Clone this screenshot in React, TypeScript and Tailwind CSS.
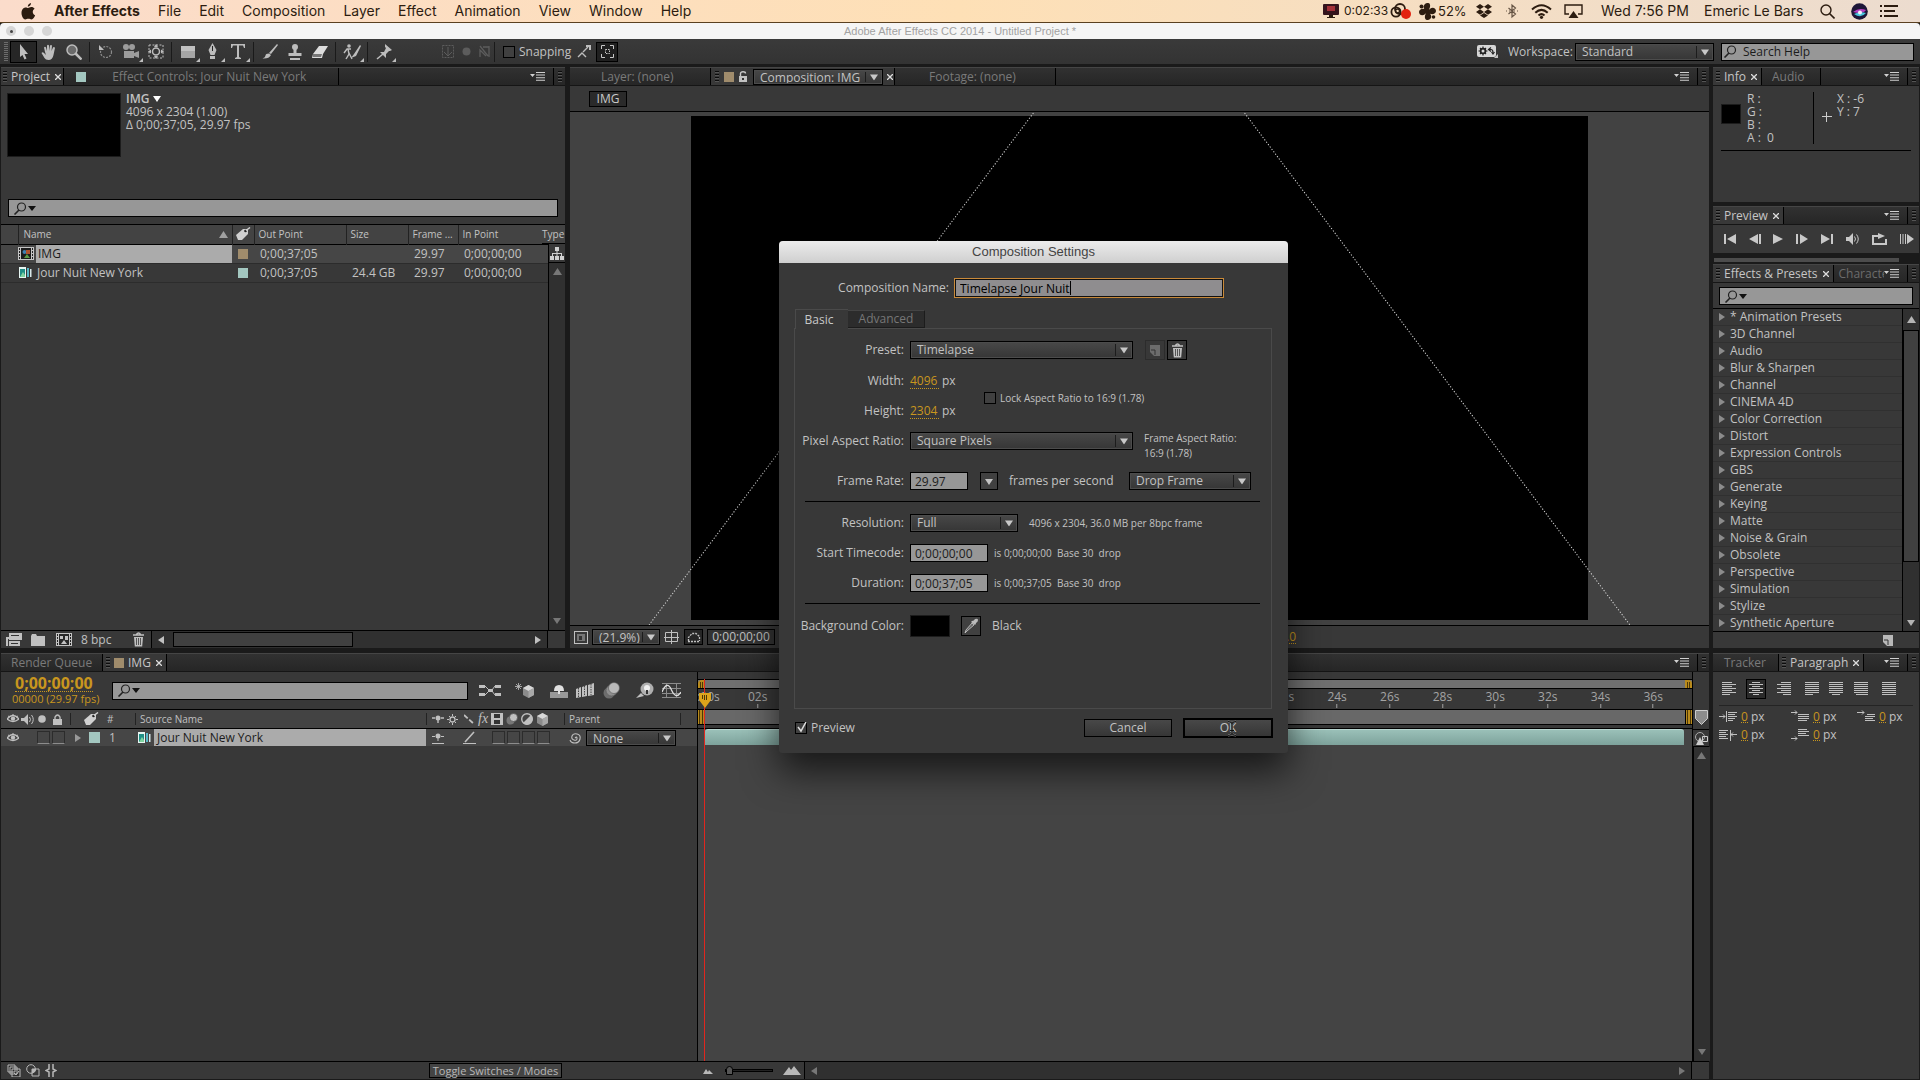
import React from "react"

interface IconProps {
    w: number,
    h: number,
    className?: string,
    children: React.ReactNode,
}

function Icon({ w, h, className = "", children }: IconProps) {
    return (
        <svg width={w} height={h} viewBox={`0 0 ${w} ${h}`} className={`shrink-0 ${className}`} fill="currentColor" aria-hidden="true">
            {children}
        </svg>
    )
}

const ArrowDown = ({ className = "" }: { className?: string }) => (
    <Icon w={8} h={7} className={className}><path d="M0 1h8L4 7z" /></Icon>
)

const ArrowRight = ({ className = "" }: { className?: string }) => (
    <Icon w={6} h={8} className={className}><path d="M0 0l6 4-6 4z" /></Icon>
)

const ArrowUp = ({ className = "" }: { className?: string }) => (
    <Icon w={9} h={7} className={className}><path d="M0 7h9L4.500 0z" /></Icon>
)

const Loupe = ({ arrow = true }: { arrow?: boolean }) => (
    <Icon w={24} h={13} className="text-[#222]">
        <circle cx="8.500" cy="5" r="4" fill="none" stroke="currentColor" strokeWidth="1.200" />
        <path d="M6 8l-4.500 4.500" stroke="currentColor" strokeWidth="1.600" />
        {arrow && <path d="M15 4h8l-4 5z" fill="#111" />}
    </Icon>
)

const Eye = () => (
    <Icon w={12} h={10}>
        <path d="M0 5Q6-2 12 5Q6 10 0 5z" fill="none" stroke="currentColor" strokeWidth="1.300" />
        <circle cx="6" cy="4.600" r="2.200" />
        <path d="M1 2l2 1M6 0v1.500M11 2l-2 1" stroke="currentColor" />
    </Icon>
)

const Tag = () => (
    <Icon w={16} h={14} className="text-[#d0d0d0]">
        <path d="M1 8l7-6 5 0 0 5-6 6-4 0z" />
        <circle cx="10.500" cy="4" r="1.300" fill="#222" />
        <path d="M11 3.500l4-3" stroke="#d0d0d0" strokeWidth="1.500" />
    </Icon>
)

const Trash = () => (
    <Icon w={13} h={15}>
        <path d="M1 3h11M4.500 2.500Q6.500-.5 8.500 2.500" fill="none" stroke="currentColor" strokeWidth="1.600" />
        <path d="M2 5h9l-.8 9.500H2.800z" />
        <path d="M4.500 6v7M6.500 6v7M8.500 6v7" stroke="#383838" strokeWidth=".8" />
    </Icon>
)

const FootageIcon = () => (
    <Icon w={14} h={13}>
        <path d="M1 1h7v11H1z" fill="#e6f5f2" />
        <path d="M2 3h5v8H2z" fill="#1f8f86" />
        <path d="M2 11l3-5 2 3v2z" fill="#7fd4a0" />
        <path d="M9 2h2v9H9z" fill="#58b8c8" />
        <path d="M12 3h1.500v8H12z" fill="#d8e8ea" />
    </Icon>
)

const CompIcon = () => (
    <Icon w={16} h={13}>
        <path d="M0 0h16v13H0z" fill="#c4c4c4" />
        <path d="M3 1h10v11H3z" fill="#1c1c1c" />
        <path d="M1 1h1v2H1zm0 3h1v2H1zm0 3h1v2H1zm0 3h1v2H1zM14 1h1v2h-1zm0 3h1v2h-1zm0 3h1v2h-1zm0 3h1v2h-1z" fill="#222" />
        <circle cx="6.500" cy="5" r="2" fill="#3f7fb0" />
        <path d="M8 3h4v4H8z" fill="#b0502c" />
        <path d="M6 11l3-4 3 4z" fill="#5e9b46" />
    </Icon>
)

const NewCompIcon = () => (
    <Icon w={16} h={13}>
        <path d="M0 0h16v13H0z" fill="#c4c4c4" />
        <path d="M3 1h10v11H3z" fill="#2a2a2a" />
        <path d="M1 1h1v2H1zm0 3h1v2H1zm0 3h1v2H1zm0 3h1v2H1zM14 1h1v2h-1zm0 3h1v2h-1zm0 3h1v2h-1zm0 3h1v2h-1z" fill="#222" />
        <path d="M4 3h3v3H4zM9 3h3v4H9zM5 11l3-4 3 4z" fill="#c4c4c4" />
    </Icon>
)

const Cube = () => (
    <Icon w={13} h={13}>
        <path d="M6.500 0L12 3v7l-5.500 3L1 10V3z" fill="#8b8b8b" />
        <path d="M6.500 0L12 3 6.500 6 1 3z" fill="#d8d8d8" />
        <path d="M6.500 6L12 3v7l-5.500 3z" fill="#a8a8a8" />
    </Icon>
)

const Balls = () => (
    <Icon w={17} h={17}>
        <circle cx="6" cy="11" r="5.500" fill="#6e6e6e" />
        <circle cx="8.500" cy="8.500" r="5.500" fill="#8f8f8f" stroke="#555" strokeWidth=".6" />
        <circle cx="11" cy="6" r="5.500" fill="#b9b9b9" stroke="#555" strokeWidth=".6" />
    </Icon>
)

const Grip = () => (
    <Icon w={4} h={13} className="text-[#151515]">
        <path d="M0 1.500h4M0 4.500h4M0 7.500h4M0 10.500h4" stroke="#0c0c0c" />
        <path d="M0 2.500h4M0 5.500h4M0 8.500h4M0 11.500h4" stroke="#555" />
    </Icon>
)

function TabClose() {
    return (
        <button aria-label="Close tab" className="flex h-3 w-2 items-center justify-center">
            <Icon w={6} h={6}><path d="M0 0l6 6M6 0L0 6" stroke="#ddd" strokeWidth="1.300" /></Icon>
        </button>
    )
}

function PanelMenu() {
    return (
        <div className="ml-auto flex h-full items-center">
            <button aria-label="Panel menu" className="mr-2 px-0">
                <Icon w={15} h={9} className="text-[#d0d0d0]">
                    <path d="M0 2h5L2.500 5zM6 0h9v1H6zM6 2.600h9v1H6zM6 5.200h9v1H6zM6 7.800h9v1H6z" />
                </Icon>
            </button>
            <div className="flex h-full w-3 items-center justify-center border-l border-black"><Grip /></div>
        </div>
    )
}

// strip with the tabs of one panel
function TabStrip({ children }: { children: React.ReactNode }) {
    return (
        <div className="flex h-[19px] w-full shrink-0 items-center overflow-hidden border-t border-b border-t-[#454545] border-b-[#151515] bg-linear-to-b from-[#313131] to-[#262626] whitespace-nowrap">
            {children}
            <PanelMenu />
        </div>
    )
}

interface TabProps {
    label: string,
    active?: boolean,
    className?: string,
    swatch?: string,
}

function Tab({ label, active, className = "", swatch }: TabProps) {
    if (active)
        return (
            <div className={`flex h-[19px] shrink-0 items-center gap-1 border-r border-black bg-[#383838] px-[3px] text-[#c6c6c6] ${className}`}>
                <Grip />
                {swatch && <span className={`h-[10px] w-[10px] ${swatch}`} />}
                <button>{label}</button>
                <TabClose />
            </div>
        )
    return (
        <button className={`flex h-full shrink-0 items-center border-r border-black text-[#7a7a7a] ${className}`}>
            {label}
        </button>
    )
}

interface SelectProps {
    id?: string,
    label?: string,
    value: string,
    className: string,
}

function Select({ id, label, value, className }: SelectProps) {
    return (
        <div className={`relative shrink-0 ${className}`}>
            <select id={id} aria-label={label} className="h-full w-full appearance-none border border-black bg-linear-to-b from-[#484848] to-[#363636] pl-[6px] text-[#c2c2c2] outline outline-[#4c4c4c] -outline-offset-2">
                <option>{value}</option>
            </select>
            <span className="pointer-events-none absolute inset-y-[3px] right-[17px] w-px bg-[#1c1c1c]" />
            <ArrowDown className="pointer-events-none absolute top-1/2 right-[5px] -translate-y-1/2 text-[#c8c8c8]" />
        </div>
    )
}

const Search = ({ label, className }: { label: string, className: string }) => (
    <label className={`flex h-[18px] items-center border border-black bg-[#979797] px-1 ${className}`}>
        <Loupe />
        <input aria-label={label} className="min-w-0 flex-1 bg-transparent outline-none" />
    </label>
)

function MenuBar() {
    const menus = ["File", "Edit", "Composition", "Layer", "Effect", "Animation", "View", "Window", "Help"]
    return (
        <header className="flex h-[23px] shrink-0 items-center border-b border-[#5a4020] bg-linear-to-r from-[#fbdccb] via-[#fee0b6] to-[#ecdccf] pr-[22px] pl-[20px] font-['Inter',sans-serif] text-[14px] leading-none whitespace-nowrap text-[#2c1c10]">
            <Icon w={16} h={17} className="mr-[18px]">
                <path d="M11 0c.2 1.800-1.400 3.700-3.200 3.700C7.600 1.900 9.300.2 11 0zM8 5c.8 0 1.700-.9 3.300-.9 1.400 0 2.600.7 3.300 1.700-2.700 1.600-2.300 5.300.5 6.400-.6 1.700-2 4.300-3.600 4.300-1.200 0-1.600-.7-3.100-.7s-2 .7-3.100.7C3.500 16.500 1.500 13 1.500 10c0-3.500 2-5.600 4.200-5.600C6.900 4.400 7.500 5 8 5z" />
            </Icon>
            <button className="mr-[18px] font-bold">After Effects</button>
            <nav className="flex items-center gap-[18px]">
                {menus.map((menu) => <button key={menu}>{menu}</button>)}
            </nav>
            <div className="ml-auto flex items-center">
                <Icon w={16} h={14}>
                    <rect width="16" height="11" rx="1" fill="#35141c" /><path d="M4 2h8v5H4z" fill="#a33038" /><path d="M6 11h4v2H6zM4 13h8v1H4z" />
                </Icon>
                <span className="ml-[5px] w-[46px] text-[12px]">0:02:33</span>
                <Icon w={21} h={16}>
                    <circle cx="10" cy="6" r="5" fill="none" stroke="currentColor" strokeWidth="1.800" />
                    <circle cx="6" cy="9" r="4.600" fill="none" stroke="currentColor" strokeWidth="1.800" />
                    <circle cx="7.500" cy="8" r="2" fill="none" stroke="currentColor" strokeWidth="1.400" />
                    <circle cx="16" cy="11" r="5" fill="#e3210f" />
                </Icon>
                <Icon w={17} h={17} className="ml-2">
                    <circle cx="8.500" cy="8.500" r="2.500" />
                    <path d="M8 8C3 6 4 1 8 0c4-.5 4 4 1 8zM9 9c2-6 8-5 8-1 0 3-5 5-8 1zM8 9c6 2 5 7 1 8-4 .5-4-5-1-8zM8 8c-2 6-8 5-8 1 0-3 5-5 8-1z" />
                    <circle cx="2.500" cy="3.500" r="2" /><circle cx="14.500" cy="14" r="1.800" />
                </Icon>
                <span className="ml-[2px] w-[37px] text-[13px]">52%</span>
                <Icon w={18} h={15}>
                    <path d="M5 0l4 2.700-4 2.600L1 2.700zM13 0l4 2.700-4 2.600-4-2.600zM5 5.300L9 8l-4 2.700L1 8zM13 5.300L17 8l-4 2.700L9 8zM5 11.500L9 9l4 2.500L9 14z" />
                </Icon>
                <Icon w={12} h={16} className="ml-[13px] opacity-70">
                    <path d="M2.500 5l7 6L6 14V2l3.500 3-7 6M0 8h1M3 8h1M8 8h1M11 8h1" fill="none" stroke="currentColor" strokeWidth="1.200" />
                </Icon>
                <Icon w={21} h={15} className="ml-[13px]">
                    <path d="M1 5.500Q10.500-3 20 5.500M4.300 8.700Q10.500 3 16.700 8.700M7.500 11.500Q10.500 8.700 13.500 11.500" fill="none" stroke="currentColor" strokeWidth="2" /><circle cx="10.500" cy="13.300" r="1.600" />
                </Icon>
                <Icon w={19} h={15} className="ml-3">
                    <path d="M5 10H1V1h17v9h-4" fill="none" stroke="currentColor" strokeWidth="1.400" /><path d="M9.500 7l5 7h-10z" />
                </Icon>
                <span className="ml-[18px] w-[103px]">Wed 7:56 PM</span>
                <span className="w-[116px]">Emeric Le Bars</span>
                <Icon w={15} h={15}>
                    <circle cx="6" cy="6" r="5" fill="none" stroke="currentColor" strokeWidth="1.400" /><path d="M9.500 9.500l5 5" stroke="currentColor" strokeWidth="1.600" />
                </Icon>
                <Icon w={17} h={17} className="ml-4">
                    <circle cx="8.500" cy="8.500" r="8.300" fill="#1d1638" />
                    <path d="M2 9q6-5 13-2-3 5-13 2z" fill="#b43fc0" /><path d="M3 11q6-3 12-1-5 6-12 1z" fill="#47c4dc" /><circle cx="9" cy="9.500" r="2" fill="#f4f4ff" />
                </Icon>
                <Icon w={18} h={12} className="ml-3">
                    <path d="M0 0h2v2H0zM4 0h14v2H4zM0 5h2v2H0zM4 5h11v2H4zM0 10h2v2H0zM4 10h14v2H4z" />
                </Icon>
            </div>
        </header>
    )
}

const Sep = () => <span className="mx-[3px] h-5 w-px shrink-0 bg-[#1a1a1a]" />

function Tool({ label, children, flyout }: { label: string, children: React.ReactNode, flyout?: boolean }) {
    return (
        <button aria-label={label} className="relative flex h-5 w-[25px] shrink-0 items-center justify-center text-[#bdbdbd]">
            {children}
            {flyout && <Icon w={4} h={4} className="absolute right-0 bottom-0"><path d="M4 0v4H0z" /></Icon>}
        </button>
    )
}

function Toolbar() {
    return (
        <div className="flex h-[25px] shrink-0 items-center bg-linear-to-b from-[#3a3a3a] to-[#333] pr-[6px] pl-1">
            <Icon w={4} h={19} className="mr-[3px] text-[#6c6c6c]"><path d="M2 0v19" stroke="currentColor" strokeWidth="4" strokeDasharray="1 1" /></Icon>
            <div className="-mx-px border border-black bg-[#262626]">
                <Tool label="Selection"><Icon w={11} h={16}><path d="M2 0l8 10H6.500l2 4.500-2 1L4.500 11 2 13z" /></Icon></Tool>
            </div>
            <Tool label="Hand">
                <Icon w={16} h={16}><path d="M4 8L3 3.500q1-1.500 2 0L6 7V1.500q1-1.500 2 0V7l1-5.500q1-1 2 0L10.500 7 12 3.500q1-1 2 .3L12.500 11q-1 5-5 5-3 0-4-2L.5 9q1-1.500 2.500 0l2 2z" /></Icon>
            </Tool>
            <Tool label="Zoom">
                <Icon w={16} h={16}><circle cx="6" cy="6" r="5" fill="#6b6b6b" stroke="currentColor" strokeWidth="1.500" /><path d="M9.500 9.500l6 6" stroke="currentColor" strokeWidth="2.500" /></Icon>
            </Tool>
            <Sep />
            <Tool label="Rotation">
                <Icon w={14} h={14}><circle cx="7" cy="7" r="5.500" fill="none" stroke="#8c8c8c" strokeWidth="1.200" strokeDasharray="2 1.200" /><path d="M0 0v5h5z" /></Icon>
            </Tool>
            <Tool label="Camera" flyout>
                <Icon w={17} h={15} className="text-[#9c9c9c]"><circle cx="4" cy="3" r="3" /><circle cx="10" cy="3" r="3" /><path d="M2 7h10v7H2zM12 9l5-2v7l-5-2z" /></Icon>
            </Tool>
            <Tool label="Pan Behind">
                <Icon w={16} h={15}><rect x="1" y="1" width="14" height="13" fill="none" stroke="currentColor" strokeDasharray="2 1.500" /><circle cx="8" cy="7.500" r="3.500" fill="none" stroke="currentColor" strokeWidth="1.500" /><path d="M8 0l2 3H6zM8 15l2-3H6zM0 7.500l3-2v4zM16 7.500l-3-2v4z" /></Icon>
            </Tool>
            <Sep />
            <Tool label="Rectangle" flyout><Icon w={14} h={12}><path d="M0 0h14v12H0z" fill="#a5a5a5" /><path d="M0 0h14v5H0z" fill="#c0c0c0" /></Icon></Tool>
            <Tool label="Pen" flyout><Icon w={11} h={17}><path d="M5.500 0l4 7-2 5h-4l-2-5zM3 13h5v3H3z" /><path d="M5.500 3v5" stroke="#222" /></Icon></Tool>
            <Tool label="Type" flyout><Icon w={14} h={15}><path d="M0 0h14v4h-1l-1-2.500H8V13l2 1v1H4v-1l2-1V1.500H2L1 4H0z" /></Icon></Tool>
            <Sep />
            <Tool label="Brush"><Icon w={16} h={15}><path d="M15 0l1 1-7 9-2-1zM7 9.500l2 1.500q-2 4-8.500 3.500 3-1 3-3t3.500-2z" /></Icon></Tool>
            <Tool label="Clone Stamp"><Icon w={16} h={16}><circle cx="8" cy="3" r="3" /><path d="M6.500 5h3v4h5v3h-13V9h5zM3 14h10v2H3z" /></Icon></Tool>
            <Tool label="Eraser"><Icon w={16} h={12}><path d="M7 0h9l-5 8-1 4H0l1-4z" fill="#ddd" /><path d="M1 8h9l-1 3H1z" fill="#777" /></Icon></Tool>
            <Sep />
            <Tool label="Roto Brush" flyout>
                <Icon w={18} h={16}><circle cx="6" cy="2" r="1.800" /><path d="M1 9l3-4h4M5 5l1 5-3 5M6 9l3 6" fill="none" stroke="currentColor" strokeWidth="1.400" /><path d="M17 1l-6 9-3 4 5-2 5-10z" /></Icon>
            </Tool>
            <Sep />
            <Tool label="Puppet Pin" flyout>
                <Icon w={16} h={16}><path d="M9 0l7 6-2 1-1 0-3 3v4L4 8h4l2-4-1-1z" /><path d="M7 10l-6 5" stroke="currentColor" strokeWidth="1.600" /></Icon>
            </Tool>
            <div className="ml-5 flex h-full items-center gap-2 pl-[26px] text-[#5c5c5c]">
                <Icon w={12} h={13}><rect x=".5" y=".5" width="11" height="12" fill="none" stroke="currentColor" strokeDasharray="2 1" /><path d="M6 2v9M2 7l4 4 4-4" fill="none" stroke="currentColor" /></Icon>
                <Icon w={9} h={9}><circle cx="4.500" cy="4.500" r="4" /></Icon>
                <Icon w={12} h={13}><path d="M1 1l8 10M1 12V5l6 6M10 1v11M4 2h6" fill="none" stroke="currentColor" strokeWidth="1.300" /></Icon>
            </div>
            <Sep />
            <label className="ml-[5px] flex items-center gap-1">
                <input type="checkbox" className="h-3 w-3 appearance-none border border-black bg-[#404040]" />
                <span className="w-[52px]">Snapping</span>
            </label>
            <Tool label="Snap edges">
                <Icon w={14} h={13}><path d="M1 12l4-4 4 4M6 7l5-5" fill="none" stroke="currentColor" strokeWidth="1.400" /><path d="M9 0h5v5h-2V2H9z" /></Icon>
            </Tool>
            <div className="border border-black bg-[#202020]">
                <button aria-label="Snap features" className="flex h-[18px] w-5 items-center justify-center text-[#c8c8c8]">
                    <Icon w={13} h={13}><path d="M.5 4V.500H4M9 .500h3.500V4M12.500 9v3.500H9M4 12.500H.500V9" fill="none" stroke="currentColor" /><path d="M4.500 4.500h4v4h-4z" fill="none" stroke="currentColor" strokeDasharray="1.500 1" /></Icon>
                </button>
            </div>
            <div className="ml-auto flex items-center">
                <button aria-label="Sync settings" className="mr-[10px]">
                    <Icon w={21} h={13}><rect width="19" height="12" rx="2" fill="#d6d6d6" /><circle cx="6" cy="6" r="2.400" fill="none" stroke="#222" strokeWidth="1.800" /><path d="M6 1.500v2M6 8.500v2M1.500 6h2M8.500 6h2M3 3l1 1M8 8l1 1M9 3L8 4M3 9l1-1" stroke="#222" strokeWidth="1.200" /><path d="M11 4.500h3q2 0 2 3M14 2.500l-2.500 2L14 6.500M14.500 7l1.500 2 1.500-2" fill="none" stroke="#222" strokeWidth="1.200" /><path d="M21 9v4h-4z" /></Icon>
                </button>
                <label htmlFor="workspace" className="w-[67px]">Workspace:</label>
                <Select id="workspace" value="Standard" className="mr-[7px] h-[18px] w-[139px]" />
                <label className="flex h-[18px] w-[193px] items-center border border-black bg-[#979797] pl-px">
                    <Loupe arrow={false} />
                    <input aria-label="Search Help" placeholder="Search Help" className="-ml-1 min-w-0 flex-1 bg-transparent text-[#1c1c1c] outline-none placeholder:text-[#1c1c1c]" />
                </label>
            </div>
        </div>
    )
}

function ScrollColumn({ children }: { children?: React.ReactNode }) {
    return (
        <div className="flex w-[17px] shrink-0 flex-col items-center border-l border-black bg-[#303030]">
            <button aria-label="Scroll up" className="flex h-4 items-center text-[#777]"><ArrowUp /></button>
            {children}
            <button aria-label="Scroll down" className="mt-auto flex h-5 items-center text-[#777]"><ArrowDown /></button>
        </div>
    )
}

function ProjectPanel() {
    const rows = [
        { name: "IMG", icon: <CompIcon />, swatch: "bg-[#a08c6c]", out: "0;00;37;05", size: "", rate: "29.97", inp: "0;00;00;00", selected: true },
        { name: "Jour Nuit New York", icon: <FootageIcon />, swatch: "bg-[#a3c7c0]", out: "0;00;37;05", size: "24.4 GB", rate: "29.97", inp: "0;00;00;00", selected: false },
    ]
    return (
        <section className="flex w-[564px] shrink-0 flex-col overflow-hidden bg-[#383838]">
            <TabStrip>
                <Tab label="Project" active className="pr-px pl-[2px]" />
                <span className="ml-3 h-[10px] w-[10px] bg-[#a3c7c0]" />
                <Tab label="Effect Controls: Jour Nuit New York" className="w-[253px] pl-[26px]" />
            </TabStrip>
            <div className="flex h-[113px] shrink-0 pt-[6px] pl-[6px]">
                <div className="mt-px h-[64px] w-[114px] border border-[#1c1c1c] bg-black" />
                <div className="ml-[5px] leading-[13px]">
                    <button className="flex items-center gap-1 leading-[13px] font-semibold">IMG <ArrowDown className="text-white" /></button>
                    <p>4096 x 2304 (1.00)</p>
                    <p>Δ 0;00;37;05, 29.97 fps</p>
                </div>
            </div>
            <Search label="Search project" className="mr-[7px] ml-[7px]" />
            <div className="mt-[7px] flex min-h-0 flex-1 border-t border-black">
                <div className="min-w-0 flex-1 overflow-hidden">
                    <table className="w-[547px] table-fixed border-collapse text-left">
                        <colgroup>
                            <col className="w-[17px]" /><col className="w-[214px]" /><col className="w-[22px]" /><col className="w-[92px]" />
                            <col className="w-[62px]" /><col className="w-[50px]" /><col className="w-[90px]" />
                        </colgroup>
                        <thead>
                            <tr className="h-[19px] border-b border-black bg-[#434343] text-[10px]">
                                <th />
                                <th className="border-l border-[#222] pl-[5px] font-normal">
                                    <div className="flex items-center justify-between pr-1">Name <ArrowUp className="text-[#a0a0a0]" /></div>
                                </th>
                                <th className="border-l border-[#222] pl-0.5"><Tag /></th>
                                <th className="border-l border-[#222] pl-1 font-normal">Out Point</th>
                                <th className="border-l border-[#222] pl-1 font-normal">Size</th>
                                <th className="border-l border-[#222] pl-1 font-normal whitespace-nowrap">Frame ...</th>
                                <th className="border-l border-[#222] pl-1 font-normal">In Point</th>
                            </tr>
                        </thead>
                        <tbody>
                            {rows.map((row) => (
                                <tr key={row.name} className={`h-[19px] border-b border-[#2c2c2c] ${row.selected ? "bg-[#464646]" : ""}`}>
                                    <td />
                                    <td>
                                        <div className="flex items-center">
                                            <span className="flex w-[18px] items-center">{row.icon}</span>
                                            <span className={row.selected ? "h-[18px] flex-1 bg-[#ababab] pl-0.5 leading-[18px] text-[#1c1c1c]" : "pl-px"}>{row.name}</span>
                                        </div>
                                    </td>
                                    <td><span className={`ml-[6px] block h-[10px] w-[10px] ${row.swatch}`} /></td>
                                    <td className="pl-[6px]">{row.out}</td>
                                    <td className="pl-[6px] whitespace-nowrap">{row.size}</td>
                                    <td className="pl-[6px]">{row.rate}</td>
                                    <td className="pl-[6px]">{row.inp}</td>
                                </tr>
                            ))}
                        </tbody>
                    </table>
                </div>
                <div className="flex w-[17px] flex-col">
                    <div className="-ml-[6px] h-[19px] shrink-0 border-b border-black bg-[#434343] text-[10px] leading-[18px]">Type</div>
                    <button aria-label="Flowchart" className="flex h-[19px] shrink-0 items-center justify-center border-b border-l border-black text-[#d0d0d0]">
                        <Icon w={14} h={13}><path d="M5 0h4v4H5zM0 9h4v4H0zM5 9h4v4H5zM10 9h4v4h-4zM6.500 4h1v5h-1zM2 6h10v3h-1V7H3v2H2z" /></Icon>
                    </button>
                    <div className="flex flex-1"><ScrollColumn /></div>
                </div>
            </div>
            <div className="flex h-[18px] shrink-0 items-center border-t border-black pl-[5px] text-[#c0c0c0]">
                <Icon w={16} h={13}><path d="M3 0h13v7H3zM0 4h10v2H2v7H0zM3 8h11v5H3z" /><path d="M5 2h8v1H5zM5 10h7v1H5z" fill="#333" /></Icon>
                <Icon w={14} h={12} className="ml-[9px]"><path d="M0 2l1-2h4l1 2h8v10H0z" /></Icon>
                <div className="ml-[11px]"><NewCompIcon /></div>
                <button className="ml-[9px] w-[51px] text-left">8 bpc</button>
                <button aria-label="Delete"><Trash /></button>
                <div className="ml-[6px] flex h-full flex-1 items-center border-x border-black bg-[#303030] px-[6px]">
                    <ArrowRight className="rotate-180" />
                    <div className="ml-[9px] h-[15px] w-[180px] border border-black bg-[#404040]" />
                    <ArrowRight className="ml-auto" />
                </div>
                <div className="w-[17px]" />
            </div>
        </section>
    )
}

function ViewerPanel() {
    return (
        <section className="flex min-w-0 flex-1 flex-col bg-[#383838]">
            <TabStrip>
                <Tab label="Layer: (none)" className="w-[141px] pl-[31px]" />
                <div className="flex h-[19px] items-center border-r border-black bg-[#383838] pl-1">
                    <Grip />
                    <span className="ml-[5px] h-[10px] w-[10px] bg-[#a08c6c]" />
                    <Icon w={9} h={11} className="mx-[5px]"><path d="M0 5h8v6H0z" /><path d="M1.500 5V2.500Q1.500 .8 4 .8T6.500 2.500" fill="none" stroke="#c8c8c8" strokeWidth="1.400" /><path d="M3 7h2v2H3z" fill="#333" /></Icon>
                    <Select label="Viewer" value="Composition: IMG" className="mr-[3px] h-4 w-[130px]" />
                    <TabClose />
                </div>
                <Tab label="Footage: (none)" className="w-[161px] pl-[34px]" />
            </TabStrip>
            <div className="flex h-[26px] shrink-0 items-center border-b border-black pl-[19px]">
                <button className="h-4 w-[38px] border border-black bg-[#2a2a2a] leading-[14px] text-[#c8c8c8]">IMG</button>
            </div>
            <div className="relative min-h-0 flex-1 bg-[#424242] px-[121px] pt-1 pb-[5px]">
                <div className="h-full bg-black" />
                <svg className="absolute inset-0 h-full w-full" viewBox="0 0 1138 513" preserveAspectRatio="none" aria-hidden="true">
                    <path d="M463 1L79 513M674 1l385 512" fill="none" stroke="#d8d8d8" strokeDasharray="1.200 1.800" />
                </svg>
            </div>
            <div className="h-[23px] shrink-0 border-t border-black">
                <div className="flex h-full w-[726px] items-center text-[#c0c0c0]">
                    <button aria-label="Always preview" className="ml-1"><Icon w={14} h={13}><rect x=".5" y=".5" width="13" height="12" fill="none" stroke="currentColor" /><path d="M3 3h8v7H3z" fill="#777" /><path d="M5 5h3v4H5z" fill="#333" /></Icon></button>
                    <Select label="Magnification" value="(21.9%)" className="mx-1 h-4 w-[68px]" />
                    <button aria-label="Grid and guides"><Icon w={16} h={14}><path d="M1.500 2.500h12v9h-12zM7.500 0v14M0 7.500h15" fill="none" stroke="currentColor" /></Icon></button>
                    <button aria-label="Mask visibility" className="mx-1 flex h-4 w-[19px] items-center justify-center border border-black bg-[#262626]">
                        <Icon w={14} h={11}><path d="M1 9.500h12M1.500 9V5.500L5 1.500h4l3.500 3V9" fill="none" stroke="currentColor" strokeWidth="1.300" strokeDasharray="2 1" /></Icon>
                    </button>
                    <button className="h-4 w-[68px] border border-black bg-[#333] leading-[14px]">0;00;00;00</button>
                    <button className="ml-auto border-b border-dotted border-[#c8961e] leading-[13px] text-[#c8961e]">+0.0</button>
                </div>
            </div>
        </section>
    )
}

function InfoPanel() {
    return (
        <section className="flex h-[135px] shrink-0 flex-col bg-[#383838]">
            <TabStrip>
                <Tab label="Info" active />
                <Tab label="Audio" className="w-[59px] pl-[10px]" />
            </TabStrip>
            <div className="mx-2 flex h-[65px] shrink-0 border-b border-black pt-[6px] leading-[13px]">
                <div className="mt-3 h-5 w-5 border border-[#1c1c1c] bg-black" />
                <div className="ml-[6px] h-[52px] w-[67px] border-r border-black">
                    <p>R :</p><p>G :</p><p>B :</p><p>A : &nbsp;0</p>
                </div>
                <Icon w={10} h={10} className="mt-5 ml-2"><path d="M4.500 0v10M0 4.500h10" stroke="#ccc" /></Icon>
                <div className="ml-[5px]"><p>X : -6</p><p>Y : 7</p></div>
            </div>
        </section>
    )
}

function PreviewPanel() {
    return (
        <section className="mt-1 flex h-[47px] shrink-0 flex-col bg-[#383838]">
            <TabStrip><Tab label="Preview" active /></TabStrip>
            <div className="flex flex-1 items-center justify-between pr-[5px] pl-[11px] text-[#c8c8c8]">
                <button aria-label="First frame"><Icon w={12} h={10}><path d="M0 0h2v10H0zM12 0v10L3 5z" /></Icon></button>
                <button aria-label="Previous frame"><Icon w={12} h={10}><path d="M10 0h2v10h-2zM9 0v10L0 5z" /></Icon></button>
                <button aria-label="Play"><Icon w={10} h={10}><path d="M0 0l10 5-10 5z" /></Icon></button>
                <button aria-label="Next frame"><Icon w={12} h={10}><path d="M0 0h2v10H0zM4 0l8 5-8 5z" /></Icon></button>
                <button aria-label="Last frame"><Icon w={12} h={10}><path d="M10 0h2v10h-2zM0 0l9 5-9 5z" /></Icon></button>
                <button aria-label="Mute audio"><Icon w={14} h={12}><path d="M0 4h3l4-4v12L3 8H0z" /><path d="M8.500 3.500q2 2.500 0 5M10.500 1.500q3.500 4.500 0 9" fill="none" stroke="currentColor" /></Icon></button>
                <button aria-label="Loop"><Icon w={15} h={12}><path d="M6 3H1v8h13V6" fill="none" stroke="currentColor" strokeWidth="2" /><path d="M6 0l7 3-7 3z" /></Icon></button>
                <button aria-label="RAM preview"><Icon w={14} h={10}><path d="M0 0h1v10H0zM2.500 0h1v10h-1zM5 0h1v10H5zM7 0l7 5-7 5z" /></Icon></button>
            </div>
        </section>
    )
}

const effects = [
    "* Animation Presets", "3D Channel", "Audio", "Blur & Sharpen", "Channel", "CINEMA 4D", "Color Correction",
    "Distort", "Expression Controls", "GBS", "Generate", "Keying", "Matte", "Noise & Grain", "Obsolete",
    "Perspective", "Simulation", "Stylize", "Synthetic Aperture",
]

function EffectsPanel() {
    return (
        <section className="flex min-h-0 flex-1 flex-col overflow-hidden bg-[#383838]">
            <TabStrip>
                <Tab label="Effects & Presets" active />
                <button className="h-full w-[54px] overflow-hidden pl-[5px] text-left text-[#6c6c6c]">Character</button>
            </TabStrip>
            <Search label="Search effects" className="mx-[6px] mt-1 mb-[3px] shrink-0" />
            <div className="flex min-h-0 flex-1 border-t border-black">
                <ul className="min-w-0 flex-1 overflow-hidden">
                    {effects.map((effect) => (
                        <li key={effect} className="border-b border-[#303030]">
                            <button className="flex h-4 items-center gap-[5px] pl-[6px] leading-4">
                                <ArrowRight className="text-[#8c8c8c]" />{effect}
                            </button>
                        </li>
                    ))}
                </ul>
                <div className="flex w-[17px] shrink-0 flex-col items-center border-l border-black bg-[#303030] text-[#b4b4b4]">
                    <button aria-label="Scroll up" className="flex h-[21px] items-center"><ArrowUp /></button>
                    <div className="h-[232px] w-full border border-black bg-[#404040]" />
                    <button aria-label="Scroll down" className="mt-auto flex h-[18px] items-center"><ArrowDown /></button>
                </div>
            </div>
            <div className="flex h-[17px] shrink-0 items-center justify-end border-t border-black pr-[26px]">
                <button aria-label="New preset"><Icon w={10} h={11}><path d="M0 0h10v11H4L0 7z" fill="#b8b8b8" /><path d="M1 5h4v5" fill="none" stroke="#333" /></Icon></button>
            </div>
        </section>
    )
}

function Lines({ kind }: { kind: string }) {
    const paths: any = {
        left: "M0 .5h10M0 2.500h14M0 4.500h10M0 6.500h14M0 8.500h10M0 10.500h14M0 12.500h8",
        center: "M3 .5h8M0 2.500h14M3 4.500h8M0 6.500h14M3 8.500h8M0 10.500h14M4 12.500h6",
        right: "M4 .5h10M0 2.500h14M4 4.500h10M0 6.500h14M4 8.500h10M0 10.500h14M6 12.500h8",
        justLeft: "M0 .5h14M0 2.500h14M0 4.500h14M0 6.500h14M0 8.500h14M0 10.500h14M0 12.500h8",
        justCenter: "M0 .5h14M0 2.500h14M0 4.500h14M0 6.500h14M0 8.500h14M0 10.500h14M3 12.500h8",
        justRight: "M0 .5h14M0 2.500h14M0 4.500h14M0 6.500h14M0 8.500h14M0 10.500h14M2 12.500h12",
        full: "M0 .5h14M0 2.500h14M0 4.500h14M0 6.500h14M0 8.500h14M0 10.500h14M0 12.500h14",
    }
    return <Icon w={14} h={14}><path d={paths[kind]} stroke="#c0c0c0" /></Icon>
}

function Indent({ label, path }: { label: string, path: string }) {
    return (
        <label className="flex items-center gap-1">
            <Icon w={18} h={13}><path d={path} fill="none" stroke="#c0c0c0" /></Icon>
            <span className="flex items-center gap-[3px]">
                <input aria-label={label} defaultValue="0" className="h-[13px] w-[7px] border-b border-dotted border-[#c8961e] bg-transparent text-[#c8961e] outline-none" /> px
            </span>
        </label>
    )
}

function ParagraphPanel() {
    return (
        <section className="flex w-[206px] shrink-0 flex-col bg-[#383838]">
            <TabStrip>
                <Tab label="Tracker" className="w-[66px] pl-[11px]" />
                <Tab label="Paragraph" active />
            </TabStrip>
            <div className="mx-[6px] flex h-[34px] items-center justify-between border-b border-[#242424] pr-[17px] pl-[3px]">
                <button aria-label="Align left"><Lines kind="left" /></button>
                <button aria-label="Align center" className="flex h-5 w-5 items-center justify-center border border-black bg-[#2a2a2a]"><Lines kind="center" /></button>
                <button aria-label="Align right" className="mr-1"><Lines kind="right" /></button>
                <button aria-label="Justify left"><Lines kind="justLeft" /></button>
                <button aria-label="Justify center"><Lines kind="justCenter" /></button>
                <button aria-label="Justify right" className="mr-1"><Lines kind="justRight" /></button>
                <button aria-label="Justify all"><Lines kind="full" /></button>
            </div>
            <div className="grid grid-cols-[72px_66px_auto] gap-y-[5px] pt-1 pl-[6px] leading-[13px]">
                <Indent label="Indent left" path="M0 6.500h6M4 4.500l2 2-2 2M7.500 1v11M9 2.500h9M9 4.500h7M9 6.500h9M9 8.500h7M9 10.500h5" />
                <Indent label="Space before" path="M0 2.500h6M4 .5l2 2-2 2M7 4.500h11M7 6.500h11M7 8.500h11M7 10.500h9" />
                <Indent label="Indent first line" path="M0 2.500h7M5 .5l2 2-2 2M10 4.500h8M8 6.500h10M8 8.500h8M8 10.500h10" />
                <Indent label="Indent right" path="M18 6.500h-6M14 4.500l-2 2 2 2M11.500 2v11M0 2.500h9M0 4.500h7M0 6.500h9M0 8.500h7M0 10.500h9" />
                <Indent label="Space after" path="M0 10.500h6M4 8.500l2 2-2 2M7 1.500h9M7 3.500h11M7 5.500h8M7 7.500h11" />
            </div>
        </section>
    )
}

function TimelinePanel() {
    const marks = Array.from({ length: 18 }, (_, i) => (i + 1) * 2)
    return (
        <section className="relative flex min-w-0 flex-1 flex-col bg-[#383838]">
            <TabStrip>
                <Tab label="Render Queue" className="w-[102px] pl-[10px]" />
                <Tab label="IMG" active swatch="bg-[#a08c6c]" />
            </TabStrip>
            <div className="flex min-h-0 flex-1">
                <div className="flex w-[696px] shrink-0 flex-col">
                    <div className="flex h-[37px] shrink-0 items-center pl-[11px]">
                        <div className="w-[100px] text-[#c8961e]">
                            <button className="ml-[3px] block border-b border-dotted border-[#c8961e] text-[16px] leading-4 font-bold">0;00;00;00</button>
                            <p className="text-[11px] leading-[14px]">00000 (29.97 fps)</p>
                        </div>
                        <Search label="Search layers" className="w-[356px]" />
                        <div className="ml-[11px] flex items-center text-[#c0c0c0]">
                            <Icon w={24} h={13}><path d="M0 1h6v3H0zM0 9h6v3H0zM16 1h6v3h-6zM16 9h6v3h-6zM9 5h5v3H9z" /><path d="M6 2l4 4M6 11l4-4M16 2l-3 4M16 11l-3-4" stroke="currentColor" /></Icon>
                            <div className="ml-3 flex items-end"><Icon w={7} h={15}><path d="M3.500 0v7M0 3.500h7M1 1l5 5M6 1L1 6" stroke="currentColor" strokeWidth=".8" /></Icon><Cube /></div>
                            <Icon w={18} h={15} className="ml-[15px]"><path d="M0 9h18v6H0z" fill="#999" /><path d="M4 8q0-6 5-6t5 6h-4v3H8V8z" fill="#e0e0e0" /></Icon>
                            <Icon w={19} h={15} className="ml-2"><path d="M0 6l5-2v10l-5 1zM6 4l5-2v11l-5 1zM12 2l6-2v12l-6 1z" /><path d="M2.500 5v9M8.500 3v10M15 1v11" stroke="#444" strokeDasharray="1.500 1" /></Icon>
                            <div className="ml-2"><Balls /></div>
                            <Icon w={18} h={17} className="ml-4"><circle cx="11" cy="7" r="6.500" fill="#b0b0b0" /><circle cx="11" cy="6" r="3" fill="#f0f0f0" /><path d="M10 8h2v4h-2z" fill="#333" /><path d="M0 16l5-5 3 3-4 1z" /></Icon>
                            <Icon w={19} h={15} className="ml-2"><path d="M0 .5h19M0 14.500h19M4.500 0v15M14.500 0v15M0 5.500h19M0 10.500h19" stroke="#8c8c8c" /><path d="M0 9Q5-3 9.500 7T19 9" fill="none" stroke="#e0e0e0" strokeWidth="1.300" /></Icon>
                        </div>
                    </div>
                    <div className="flex h-5 shrink-0 items-center border-y border-black bg-[#434343] pl-[6px] text-[10px] text-[#c0c0c0]">
                        <Eye />
                        <Icon w={14} h={11} className="ml-[2px]"><path d="M0 4h3l4-4v11L3 7H0z" /><path d="M8.500 3q2 2.500 0 5M10.500 1q3.500 4.500 0 9" fill="none" stroke="currentColor" /></Icon>
                        <Icon w={8} h={8} className="ml-[3px]"><circle cx="4" cy="4" r="3.800" /></Icon>
                        <Icon w={9} h={11} className="mr-2 ml-[7px]"><path d="M0 5h9v6H0z" /><path d="M2 5V3q2.500-4 5 0v2" fill="none" stroke="currentColor" strokeWidth="1.400" /></Icon>
                        <span className="mr-3 h-3 w-px bg-[#222]" />
                        <Tag />
                        <span className="ml-2 w-7">#</span>
                        <span className="h-3 w-px bg-[#222]" />
                        <span className="ml-1 w-[286px]">Source Name</span>
                        <span className="mr-[5px] h-3 w-px bg-[#222]" />
                        <div className="flex w-[132px] items-center gap-[3px]">
                            <Icon w={12} h={8}><circle cx="6" cy="3" r="2.500" /><path d="M0 3h3M9 3h3M6 5v3" stroke="currentColor" strokeWidth="1.400" /></Icon>
                            <Icon w={11} h={11} className="mr-[3px]"><circle cx="5.500" cy="5.500" r="2.500" fill="none" stroke="currentColor" strokeWidth="1.300" /><path d="M5.500 0v2M5.500 9v2M0 5.500h2M9 5.500h2M2 2l1 1M8 8l1 1M9 2L8 3M3 8L2 9" stroke="currentColor" /></Icon>
                            <Icon w={11} h={11}><path d="M0 1l10 9" stroke="currentColor" strokeWidth="1.800" strokeDasharray="5 2" /></Icon>
                            <span className="font-['Liberation_Serif',serif] text-[14px] leading-none italic">fx</span>
                            <Icon w={12} h={12}><path d="M0 0h12v12H0z" /><path d="M3 1h6v4H3zM3 7h6v4H3z" fill="#333" /></Icon>
                            <Icon w={12} h={12}><circle cx="4.500" cy="7.500" r="4" fill="#777" /><circle cx="7.500" cy="4.500" r="4" stroke="#444" strokeWidth=".6" /></Icon>
                            <Icon w={12} h={12}><circle cx="6" cy="6" r="5.300" fill="none" stroke="currentColor" strokeWidth="1.400" /><path d="M10 2A5.600 5.600 0 0 1 2 10z" /></Icon>
                            <Cube />
                        </div>
                        <span className="h-3 w-px bg-[#222]" />
                        <span className="ml-1 w-[111px]">Parent</span>
                        <span className="h-3 w-px bg-[#222]" />
                    </div>
                    <div className="flex h-[17px] shrink-0 items-center bg-[#464646] pl-[6px] text-[#c0c0c0]">
                        <button aria-label="Video"><Eye /></button>
                        <div className="ml-[18px] flex gap-[2px]">
                            <button aria-label="Solo" className="h-[13px] w-[13px] border border-[#2c2c2c] border-b-[#8c8c8c]" />
                            <button aria-label="Lock" className="h-[13px] w-[13px] border border-[#2c2c2c] border-b-[#8c8c8c]" />
                        </div>
                        <button aria-label="Expand layer" className="ml-[10px]"><ArrowRight className="text-[#999]" /></button>
                        <span className="ml-2 h-[11px] w-[11px] bg-[#a3c7c0]" />
                        <span className="ml-[9px] w-[28px]">1</span>
                        <FootageIcon />
                        <span className="ml-[3px] h-[17px] w-[272px] bg-[#ababab] pl-[3px] leading-[17px] text-[#1c1c1c]">Jour Nuit New York</span>
                        <div className="flex w-[143px] items-center pl-[6px]">
                            <Icon w={12} h={12}><circle cx="6" cy="4" r="2.500" /><path d="M0 4.500h3M9 4.500h3M6 6v3M0 11.500h12" stroke="currentColor" /></Icon>
                            <Icon w={13} h={13} className="ml-[19px]"><path d="M2 11L11 1" stroke="currentColor" strokeWidth="1.600" /><path d="M0 12.500h13" stroke="currentColor" /></Icon>
                            <div className="ml-4 flex gap-[2px]">
                                {["Effect", "Frame blend", "Motion blur", "Adjustment"].map((name) => (
                                    <button key={name} aria-label={name} className="h-[13px] w-[13px] border border-[#2c2c2c] border-b-[#8c8c8c]" />
                                ))}
                            </div>
                        </div>
                        <Icon w={13} h={12}><path d="M6 6q2-2 2 .5T5 8 3 4t5-2 3 5-5 4-5-3" fill="none" stroke="currentColor" strokeWidth="1.100" /></Icon>
                        <Select label="Parent" value="None" className="ml-1 h-4 w-[90px]" />
                    </div>
                </div>
                <div className="relative flex min-w-0 flex-1 flex-col overflow-hidden border-l border-black bg-[#444]">
                    <div className="h-[37px] shrink-0 bg-[#383838] pt-[7px]">
                        <div className="flex h-[10px] justify-between border-y border-black bg-[#707070]">
                            <span className="w-[7px] rounded-tl bg-[#b88a1c] px-[2px] pt-[2px]"><i className="block h-full border-x border-[#4c3808]" /></span>
                            <span className="w-[7px] rounded-tr bg-[#b88a1c] px-[2px] pt-[2px]"><i className="block h-full border-x border-[#4c3808]" /></span>
                        </div>
                        <div className="relative mr-2 ml-[7px] h-5 text-[#a4a4a4]">
                            <span className="absolute left-0 -translate-x-1/2 leading-[15px]">0:00s</span>
                            {marks.map((mark) => (
                                <span key={mark} className="absolute flex -translate-x-1/2 flex-col items-center leading-[15px]" style={{ left: `${mark / 0.3717}%` }}>
                                    {mark < 10 ? `0${mark}s` : `${mark}s`}
                                    <span className="h-[4px] w-px bg-[#a4a4a4]" />
                                </span>
                            ))}
                        </div>
                    </div>
                    <div className="flex h-4 shrink-0 justify-between border-y border-black bg-[#686868]">
                        <span className="w-[7px] border-r border-black bg-[#b88a1c] px-px"><i className="block h-full border-x border-[#4c3808]" /></span>
                        <span className="w-[7px] border-l border-black bg-[#b88a1c] px-px"><i className="block h-full border-x border-[#4c3808]" /></span>
                    </div>
                    <div className="h-[4px] shrink-0 border-b border-black bg-[#383838]" />
                    <div className="mr-2 ml-[7px] h-4 shrink-0 rounded-t-[3px] border-t border-[#b8d6d0] bg-linear-to-b from-[#9ac0b8] to-[#7ea39c]" />
                    <span className="absolute top-[7px] bottom-0 left-[6px] w-px bg-[#e0261e]" />
                    <Icon w={14} h={16} className="absolute top-[20px] left-0"><path d="M1 1h12v7l-6 8-6-8z" fill="#dca41c" /><path d="M4.500 3v4M6.500 3v5M8.500 3v5" stroke="#4c3808" /></Icon>
                </div>
                <div className="flex w-[17px] shrink-0 flex-col items-center border-l border-black text-[#aaa]">
                    <Icon w={13} h={15} className="mt-[38px]"><path d="M.5.500h12v8l-6 6-6-6z" fill="#8c8c8c" stroke="#ccc" /></Icon>
                    <div className="mt-1 flex h-[18px] w-full items-center justify-center border-y border-black">
                        <Icon w={15} h={13}><circle cx="6" cy="5" r="4.500" fill="none" stroke="currentColor" /><path d="M8.500 4.500h5v5h-5z" fill="none" stroke="#ccc" /><path d="M6 5l4 8H2z" fill="#ccc" /></Icon>
                    </div>
                    <div className="flex flex-1"><ScrollColumn /></div>
                </div>
            </div>
            <div className="flex h-[18px] shrink-0 items-center border-t border-black text-[#b8b8b8]">
                <div className="flex w-[561px] items-center gap-[5px] pl-[6px]">
                    <button aria-label="Layer switches"><Icon w={14} h={13}><path d="M1 1h7v7H1zM3 3h7v7H3zM5 5h8v8H5z" fill="#2c2c2c" stroke="currentColor" /><path d="M7 9l2 2 3-4" fill="none" stroke="currentColor" /></Icon></button>
                    <button aria-label="Transfer controls"><Icon w={14} h={13}><circle cx="5" cy="5" r="4.300" fill="none" stroke="currentColor" /><path d="M6 5h7v7H6z" fill="none" stroke="currentColor" /><path d="M6 5h4q0 4-4 4z" /></Icon></button>
                    <button aria-label="In and out"><Icon w={12} h={13}><path d="M4 0v5L1 6.500 4 8v5M8 0v5l3 1.500L8 8v5" fill="none" stroke="currentColor" strokeWidth="1.500" /></Icon></button>
                    <button className="ml-auto h-[15px] w-[133px] border border-black bg-[#444] text-[11px] leading-[13px]">Toggle Switches / Modes</button>
                </div>
                <div className="ml-[141px] flex items-center">
                    <Icon w={10} h={6}><path d="M0 6l3-5 2 3 1-2 4 4z" /></Icon>
                    <label className="ml-3 flex items-center">
                        <input aria-label="Timeline zoom" type="range" defaultValue="0" className="h-[3px] w-[48px] appearance-none border border-black bg-[#222] [&::-webkit-slider-thumb]:h-[9px] [&::-webkit-slider-thumb]:w-[7px] [&::-webkit-slider-thumb]:appearance-none [&::-webkit-slider-thumb]:rounded-t [&::-webkit-slider-thumb]:border [&::-webkit-slider-thumb]:border-black [&::-webkit-slider-thumb]:bg-[#555]" />
                    </label>
                    <Icon w={18} h={9} className="ml-[10px]"><path d="M0 9l6-8 2 3 3-4 7 9z" /></Icon>
                </div>
                <div className="ml-[3px] flex h-full flex-1 items-center justify-between border-x border-black bg-[#303030] px-[6px] text-[#777]">
                    <ArrowRight className="rotate-180" />
                    <ArrowRight />
                </div>
                <div className="w-[17px]" />
            </div>
        </section>
    )
}

function Row({ htmlFor, label, children, className = "" }: { htmlFor: string, label: string, children: React.ReactNode, className?: string }) {
    return (
        <div className={`flex items-center ${className}`}>
            <label htmlFor={htmlFor} className="mr-[6px] w-[109px] text-right whitespace-nowrap">{label}</label>
            {children}
        </div>
    )
}

const field = "h-[18px] border border-black bg-[#979797] pl-1 text-[#1c1c1c] outline-none"
const amber = "h-[15px] w-[29px] border-b border-dotted border-[#c8961e] bg-transparent text-[#c8961e] outline-none"

function CompositionDialog() {
    return (
        <div role="dialog" aria-label="Composition Settings" className="absolute top-[241px] left-[779px] flex h-[512px] w-[509px] flex-col rounded-t-[4px] rounded-b-[3px] bg-[#383838] shadow-[0_18px_36px_rgba(0,0,0,0.65)]">
            <h2 className="h-[22px] shrink-0 rounded-t-[4px] bg-linear-to-b from-[#ececec] to-[#cfcfcf] text-center font-['Liberation_Sans',sans-serif] text-[13px] leading-[22px] text-[#444]">Composition Settings</h2>
            <div className="mt-[15px] flex items-center pl-[59px]">
                <label htmlFor="name" className="mr-[5px] w-[111px] text-right whitespace-nowrap">Composition Name:</label>
                <div className="relative">
                    <input id="name" defaultValue="Timelapse Jour Nuit" className="h-5 w-[270px] border border-[#c98a3a] bg-[#8f8d8f] pl-[5px] text-black shadow-[inset_0_0_0_1px_#111] outline-none" />
                    <span className="absolute top-[3px] left-[116px] h-[14px] w-px bg-black" />
                </div>
            </div>
            <div className="mt-[11px] ml-4 flex h-[19px] items-end">
                <button className="relative z-10 -mr-px -mb-px h-5 w-[53px] border-t border-l border-[#4a4a4a] bg-[#383838] pr-[6px] text-[#c8c8c8]">Basic</button>
                <button className="h-[18px] w-[78px] border border-[#1c1c1c] border-t-[#444] bg-[#2c2c2c] text-[#777]">Advanced</button>
            </div>
            <div className="mr-4 ml-[15px] h-[381px] border border-[#4a4a4a] pt-[11px]">
                <Row htmlFor="preset" label="Preset:" className="h-5">
                    <Select id="preset" value="Timelapse" className="h-[18px] w-[223px]" />
                    <button aria-label="Save preset" className="ml-3 flex h-5 w-5 items-center justify-center border border-[#2c2c2c] text-[#6c6c6c]"><Icon w={10} h={11}><path d="M0 0h10v11H4L0 7z" /><path d="M1 5h4v5" fill="none" stroke="#333" /></Icon></button>
                    <button aria-label="Delete preset" className="ml-[2px] flex h-5 w-5 items-center justify-center border border-black text-[#c0c0c0]"><Trash /></button>
                </Row>
                <div className="relative mt-[13px]">
                    <Row htmlFor="width" label="Width:" className="h-4"><input id="width" defaultValue="4096" className={amber} /><span className="ml-[3px]">px</span></Row>
                    <Row htmlFor="height" label="Height:" className="mt-[14px] h-4"><input id="height" defaultValue="2304" className={amber} /><span className="ml-[3px]">px</span></Row>
                    <label className="absolute top-[19px] left-[189px] flex h-3 items-center gap-1 text-[10px] whitespace-nowrap">
                        <input type="checkbox" className="h-3 w-3 appearance-none border border-black bg-[#404040]" />
                        Lock Aspect Ratio to 16:9 (1.78)
                    </label>
                </div>
                <Row htmlFor="par" label="Pixel Aspect Ratio:" className="mt-[6px] h-8">
                    <Select id="par" value="Square Pixels" className="h-[18px] w-[223px]" />
                    <p className="ml-[11px] pt-[10px] text-[10px] leading-[15px]">Frame Aspect Ratio:<br />16:9 (1.78)</p>
                </Row>
                <Row htmlFor="rate" label="Frame Rate:" className="mt-[15px] h-[18px]">
                    <input id="rate" defaultValue="29.97" className={`w-[58px] ${field}`} />
                    <button aria-label="Frame rates" className="ml-3 flex h-[18px] w-[18px] items-center justify-center border border-black bg-[#404040]"><ArrowDown /></button>
                    <span className="ml-[11px] w-[120px] whitespace-nowrap">frames per second</span>
                    <Select label="Drop frame" value="Drop Frame" className="h-[18px] w-[122px]" />
                </Row>
                <hr className="mt-[11px] mr-[11px] ml-[10px] border-t border-black" />
                <Row htmlFor="res" label="Resolution:" className="mt-3 h-[18px]">
                    <Select id="res" value="Full" className="h-[18px] w-[108px]" />
                    <span className="ml-[11px] text-[10px]">4096 x 2304, 36.0 MB per 8bpc frame</span>
                </Row>
                <Row htmlFor="start" label="Start Timecode:" className="mt-3 h-[18px]">
                    <input id="start" defaultValue="0;00;00;00" className={`w-[78px] ${field}`} />
                    <span className="ml-[6px] text-[10px]">is 0;00;00;00 &nbsp;Base 30 &nbsp;drop</span>
                </Row>
                <Row htmlFor="duration" label="Duration:" className="mt-3 h-[18px]">
                    <input id="duration" defaultValue="0;00;37;05" className={`w-[78px] ${field}`} />
                    <span className="ml-[6px] text-[10px]">is 0;00;37;05 &nbsp;Base 30 &nbsp;drop</span>
                </Row>
                <hr className="mt-[11px] mr-[11px] ml-[10px] border-t border-black" />
                <Row htmlFor="bg" label="Background Color:" className="mt-[11px] h-[22px]">
                    <button id="bg" aria-label="Background color" className="h-[22px] w-10 border border-[#1c1c1c] bg-black" />
                    <button aria-label="Eyedropper" className="ml-[11px] flex h-5 w-5 items-center justify-center border border-black bg-[#404040]">
                        <Icon w={16} h={16}><path d="M9 3q2 0 3-2 3-1 3 1 0 2-2 3 0 1-1 2L8 4z" fill="#bbb" /><path d="M2 15l1-3 6-7 2 2-7 6z" fill="#666" stroke="#ccc" strokeWidth=".8" /></Icon>
                    </button>
                    <span className="ml-[11px]">Black</span>
                </Row>
            </div>
            <div className="mt-[9px] flex h-5 items-center pr-[15px] pl-4">
                <label className="flex items-center gap-1">
                    <span className="relative block h-3 w-3">
                        <input type="checkbox" defaultChecked className="block h-3 w-3 appearance-none border border-black bg-[#404040]" />
                        <Icon w={12} h={11} className="pointer-events-none absolute top-0 left-0"><path d="M3 5l3 4 5-9" fill="none" stroke="#ddd" strokeWidth="1.500" /></Icon>
                    </span>
                    Preview
                </label>
                <button className="ml-auto h-[18px] w-[88px] border border-black bg-linear-to-b from-[#484848] to-[#363636] leading-4">Cancel</button>
                <button className="relative ml-[11px] flex h-5 w-[90px] items-center justify-center border-2 border-black bg-linear-to-b from-[#484848] to-[#363636]">
                    OK
                    <Icon w={10} h={17} className="absolute top-0 left-[42px]">
                        <path d="M1 1.500q3 0 4 2 1-2 4-2M5 3v11M1 15.500q3 0 4-2 1 2 4 2M3 10.500h4" fill="none" stroke="#8c8c8c" strokeWidth="2" />
                        <path d="M1 1.500q3 0 4 2 1-2 4-2M5 3v11M1 15.500q3 0 4-2 1 2 4 2M3 10.500h4" fill="none" stroke="#111" strokeWidth="1.200" />
                    </Icon>
                </button>
            </div>
        </div>
    )
}

export default function App() {
    return (
        <div className="relative flex h-screen w-full flex-col overflow-hidden bg-[#1a1a1a] font-['Open_Sans',sans-serif] text-[12px] leading-4 text-[#c2c2c2]">
            <MenuBar />
            <div className="flex h-4 shrink-0 items-center rounded-t bg-[#f5f5f5] pl-[6px] font-['Liberation_Sans',sans-serif] text-[11px] text-[#a2a2a2]">
                <div className="flex gap-2">
                    <button aria-label="Close" className="flex h-[10px] w-[10px] items-center justify-center rounded-full bg-[#d6d6d6]"><i className="h-[3px] w-[3px] rounded-full bg-[#444]" /></button>
                    <button aria-label="Minimize" className="h-[10px] w-[10px] rounded-full bg-[#d6d6d6]" />
                    <button aria-label="Zoom" className="h-[10px] w-[10px] rounded-full bg-[#d6d6d6]" />
                </div>
                <h1 className="flex-1 pr-[52px] text-center">Adobe After Effects CC 2014 - Untitled Project *</h1>
            </div>
            <Toolbar />
            <main className="mt-[3px] grid min-h-0 flex-1 grid-rows-[581fr_426fr] gap-[5px] px-px pb-px">
                <div className="flex min-h-0">
                    <ProjectPanel />
                    <div className="ml-[5px] flex min-w-0 flex-1"><ViewerPanel /></div>
                    <div className="ml-1 flex w-[206px] shrink-0 flex-col">
                        <InfoPanel />
                        <PreviewPanel />
                        <div className="mt-[5px] mr-5 mb-[2px] ml-px h-1 shrink-0 bg-[#4c4c4c]" />
                        <EffectsPanel />
                    </div>
                </div>
                <div className="flex min-h-0 gap-1">
                    <TimelinePanel />
                    <ParagraphPanel />
                </div>
            </main>
            <CompositionDialog />
        </div>
    )
}
